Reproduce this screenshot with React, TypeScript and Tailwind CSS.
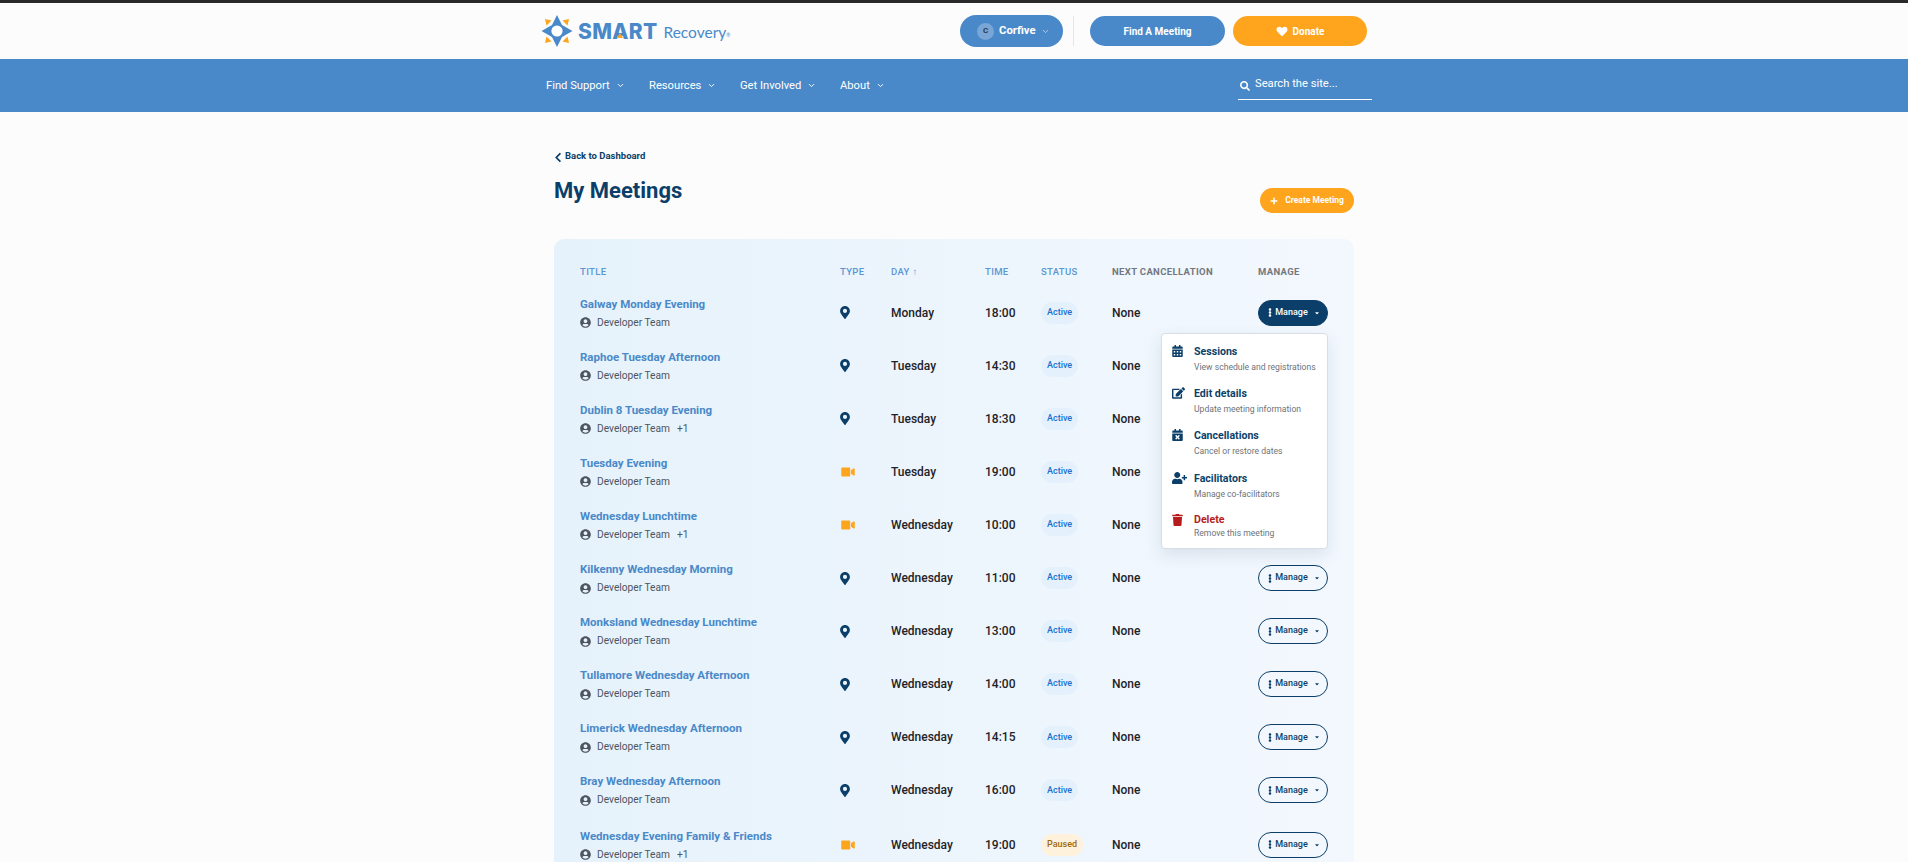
import React from "react";
import {
  FaMapMarkerAlt, FaVideo, FaUserCircle, FaCalendarAlt, FaEdit, FaCalendarTimes,
  FaUserPlus, FaTrash, FaHeart, FaSearch, FaChevronLeft, FaPlus, FaEllipsisV, FaCaretDown,
} from "react-icons/fa";
import { LuChevronDown } from "react-icons/lu";

type Row = { title: string; online?: boolean; day: string; time: string; extra?: boolean; paused?: boolean };

const rows: Row[] = [
  { title: "Galway Monday Evening", day: "Monday", time: "18:00" },
  { title: "Raphoe Tuesday Afternoon", day: "Tuesday", time: "14:30" },
  { title: "Dublin 8 Tuesday Evening", day: "Tuesday", time: "18:30", extra: true },
  { title: "Tuesday Evening", online: true, day: "Tuesday", time: "19:00" },
  { title: "Wednesday Lunchtime", online: true, day: "Wednesday", time: "10:00", extra: true },
  { title: "Kilkenny Wednesday Morning", day: "Wednesday", time: "11:00" },
  { title: "Monksland Wednesday Lunchtime", day: "Wednesday", time: "13:00" },
  { title: "Tullamore Wednesday Afternoon", day: "Wednesday", time: "14:00" },
  { title: "Limerick Wednesday Afternoon", day: "Wednesday", time: "14:15" },
  { title: "Bray Wednesday Afternoon", day: "Wednesday", time: "16:00" },
  { title: "Wednesday Evening Family & Friends", online: true, day: "Wednesday", time: "19:00", extra: true, paused: true },
];

const menu = [
  { icon: <FaCalendarAlt className="w-[11px] h-[12px]" />, title: "Sessions", sub: "View schedule and registrations", h: "h-[41.6px]" },
  { icon: <FaEdit className="w-[13px] h-[12px]" />, title: "Edit details", sub: "Update meeting information", h: "h-[42.6px]" },
  { icon: <FaCalendarTimes className="w-[11px] h-[12px]" />, title: "Cancellations", sub: "Cancel or restore dates", h: "h-[43px]" },
  { icon: <FaUserPlus className="w-[15px] h-[12px]" />, title: "Facilitators", sub: "Manage co-facilitators", h: "h-[41.6px]" },
];

function Logo() {
  return (
    <div className="flex items-center">
      <svg width="32" height="32" viewBox="0 0 32 32" className="shrink-0">
        <path d="M16 0 L21 10 L31.5 16 L21 22 L16 32 L11 22 L0.5 16 L11 10 Z" fill="#4a89c9" />
        <circle cx="16" cy="16" r="5.6" fill="#fff" />
        <path d="M4 4 L10.5 5.5 L5.5 10.5 Z M28 4 L21.5 5.5 L26.5 10.5 Z M4 28 L10.5 26.5 L5.5 21.5 Z M28 28 L21.5 26.5 L26.5 21.5 Z" fill="#fea41d" />
      </svg>
      <span className="relative ml-[5px] text-[21px] leading-none font-extrabold tracking-[0.3px] text-[#4a89c9] font-['Inter',sans-serif]">
        SMART
        <svg width="6" height="5" viewBox="0 0 6 5" className="absolute left-[39px] top-[12px]">
          <path d="M3 0 L6 5 L0 5 Z" fill="#fea41d" />
        </svg>
      </span>
      <span className="ml-[6px] mt-[4px] text-[15.5px] leading-none text-[#4a89c9] font-['Lato',sans-serif]">Recovery</span>
      <span className="mt-[9px] text-[5px] leading-none text-[#4a89c9] font-['Lato',sans-serif]">®</span>
    </div>
  );
}

function NavItem({ label, className }: { label: string; className: string }) {
  return (
    <div className={`flex items-center mt-px text-white text-[11.2px] ${className}`}>
      {label}
      <LuChevronDown strokeWidth={2.5} className="ml-[6px] w-[9px] h-[9px]" />
    </div>
  );
}

function Sub({ extra }: { extra?: boolean }) {
  return (
    <div className="flex items-center mt-[6px] text-[10.2px] leading-[12px] text-[#4d5560]">
      <FaUserCircle className="w-[11px] h-[11px] mr-[6px] text-[#4d5560]" />
      Developer Team
      {extra && <span className="ml-[7px]">+1</span>}
    </div>
  );
}

export default function App() {
  return (
    <div className="h-screen overflow-hidden bg-[#fcfcfd] font-['Roboto',sans-serif] border-t-[3px] border-[#2a2a2a]">
      <header className="h-[56px] flex justify-center">
        <div className="w-[826px] flex items-center">
          <Logo />
          <div className="ml-auto flex items-center h-[32px] w-[103px] rounded-full bg-[#4a89c9] pl-[17px] text-white text-[11.3px] font-bold">
            <span className="flex items-center justify-center w-[17px] h-[17px] rounded-full bg-[#79a6d6] text-[#2b3a4a] text-[8px] font-bold">C</span>
            <span className="ml-[5px]">Corfive</span>
            <LuChevronDown className="ml-[5px] w-[9px] h-[9px] text-[#cfe0f2]" />
          </div>
          <div className="w-px h-[30px] bg-[#e4e6e8] mx-[16px] ml-[10px]" />
          <div className="flex items-center justify-center h-[30px] w-[135px] rounded-full bg-[#4a89c9] text-white text-[10px] font-bold">Find A Meeting</div>
          <div className="ml-[8px] flex items-center justify-center h-[30px] w-[134px] rounded-full bg-[#fea41d] text-white text-[10px] font-bold">
            <FaHeart className="w-[12px] h-[11px] mr-[5px]" />
            Donate
          </div>
        </div>
      </header>

      <nav className="h-[53px] bg-[#4a89c9] flex justify-center">
        <div className="w-[836px] pl-[10px] flex items-center">
          <NavItem label="Find Support" className="w-[103px]" />
          <NavItem label="Resources" className="w-[91px]" />
          <NavItem label="Get Involved" className="w-[100px]" />
          <NavItem label="About" className="" />
          <div className="ml-auto w-[134px] h-[28px] pb-[1px] border-b border-white flex items-center text-white text-[11.2px]">
            <FaSearch className="w-[10px] h-[10px] ml-[2px] mr-[5px] mt-[2px]" />
            Search the site...
          </div>
        </div>
      </nav>

      <main className="w-[800px] mx-auto">
        <a className="mt-[38px] flex items-center h-[12px] text-[9.5px] font-bold text-[#0b3f69]">
          <FaChevronLeft className="w-[8px] h-[11px] mr-[3px] mt-[2px]" />
          Back to Dashboard
        </a>
        <div className="flex items-start justify-between">
          <h1 className="mt-[15px] text-[22px] leading-[28px] font-bold text-[#0b3f69]">My Meetings</h1>
          <div className="mt-[26px] flex items-center justify-center h-[25px] w-[94px] rounded-full bg-[#fea41d] text-white text-[8.5px] font-bold">
            <FaPlus className="w-[8px] h-[8px] mr-[7px]" />
            Create Meeting
          </div>
        </div>

        <section className="relative mt-[26px] rounded-t-[10px] bg-gradient-to-r from-[#e6f2fb] to-[#f3f8fe] px-[26px] pt-[20px] pb-[40px]">
          <table className="w-[748px] table-fixed border-collapse">
            <colgroup>
              <col className="w-[260px]" />
              <col className="w-[51px]" />
              <col className="w-[94px]" />
              <col className="w-[56px]" />
              <col className="w-[71px]" />
              <col className="w-[146px]" />
              <col className="w-[70px]" />
            </colgroup>
            <thead>
              <tr className="h-[27px] text-left text-[9.5px] font-medium tracking-[0.35px] uppercase">
                <th className="font-medium text-[#5a96d4] align-top pt-[6px]">Title</th>
                <th className="font-medium text-[#5a96d4] align-top pt-[6px]">Type</th>
                <th className="font-medium text-[#5a96d4] align-top pt-[6px]">Day ↑</th>
                <th className="font-medium text-[#5a96d4] align-top pt-[6px]">Time</th>
                <th className="font-medium text-[#5a96d4] align-top pt-[6px]">Status</th>
                <th className="font-bold text-[#73787e] align-top pt-[6px]">Next Cancellation</th>
                <th className="font-bold text-[#73787e] align-top pt-[6px]">Manage</th>
              </tr>
            </thead>
            <tbody>
              {rows.map((r, i) => (
                <tr key={i} className={i === 10 ? "h-[56px]" : "h-[53.1px]"}>
                  <td>
                    <div className="text-[11.5px] leading-[14px] font-bold text-[#4a89c9]">{r.title}</div>
                    <Sub extra={r.extra} />
                  </td>
                  <td>
                    {r.online ? (
                      <FaVideo className="w-[16px] h-[12px] text-[#fea41d]" />
                    ) : (
                      <FaMapMarkerAlt className="w-[10px] h-[13px] text-[#0b3f69]" />
                    )}
                  </td>
                  <td className="text-[12px] font-medium text-[#1f2328]">{r.day}</td>
                  <td className="text-[12px] font-medium text-[#1f2328]">{r.time}</td>
                  <td>
                    {r.paused ? (
                      <span className="flex w-fit items-center h-[22px] px-[6px] rounded-full bg-[#fff2dc] text-[#a06a08] text-[9px] font-medium">Paused</span>
                    ) : (
                      <span className="flex w-fit items-center h-[22px] px-[6px] rounded-full bg-[#e4f1fd] text-[#1b6fd1] text-[9px] font-medium">Active</span>
                    )}
                  </td>
                  <td className="text-[12px] font-medium text-[#1f2328]">None</td>
                  <td>
                    {i !== 1 && i !== 2 && i !== 3 && i !== 4 && (
                      <div
                        className={`flex items-center justify-center h-[26px] w-[70px] rounded-full border border-[#0b3f69] text-[9px] font-medium ${
                          i === 0 ? "bg-[#0b3f69] text-white" : "text-[#0b3f69]"
                        }`}
                      >
                        <FaEllipsisV className="w-[8px] h-[9px]" />
                        <span className="ml-[1px]">Manage</span>
                        <FaCaretDown className="ml-[6px] w-[6px] h-[6px]" />
                      </div>
                    )}
                  </td>
                </tr>
              ))}
            </tbody>
          </table>

          <div className="absolute left-[607px] top-[94px] w-[167px] h-[216px] rounded-[4px] bg-white border border-[#d9dee6] shadow-[0_6px_16px_rgba(40,70,110,0.12)] pl-[10px] pt-[10px]">
            {menu.map((m) => (
              <div key={m.title} className={`flex ${m.h}`}>
                <div className="w-[22px] text-[#0b3f69] pt-[1px]">{m.icon}</div>
                <div>
                  <div className="text-[10.6px] leading-[15px] font-bold text-[#0b3f69]">{m.title}</div>
                  <div className="mt-[2px] text-[8.6px] leading-[12px] text-[#6d737a]">{m.sub}</div>
                </div>
              </div>
            ))}
            <div className="flex">
              <div className="w-[22px] text-[#b71c1c] pt-[1px]"><FaTrash className="w-[11px] h-[12px]" /></div>
              <div>
                <div className="text-[10.6px] leading-[14px] font-bold text-[#b71c1c]">Delete</div>
                <div className="text-[8.6px] leading-[12px] text-[#6d737a]">Remove this meeting</div>
              </div>
            </div>
          </div>
        </section>
      </main>
    </div>
  );
}
